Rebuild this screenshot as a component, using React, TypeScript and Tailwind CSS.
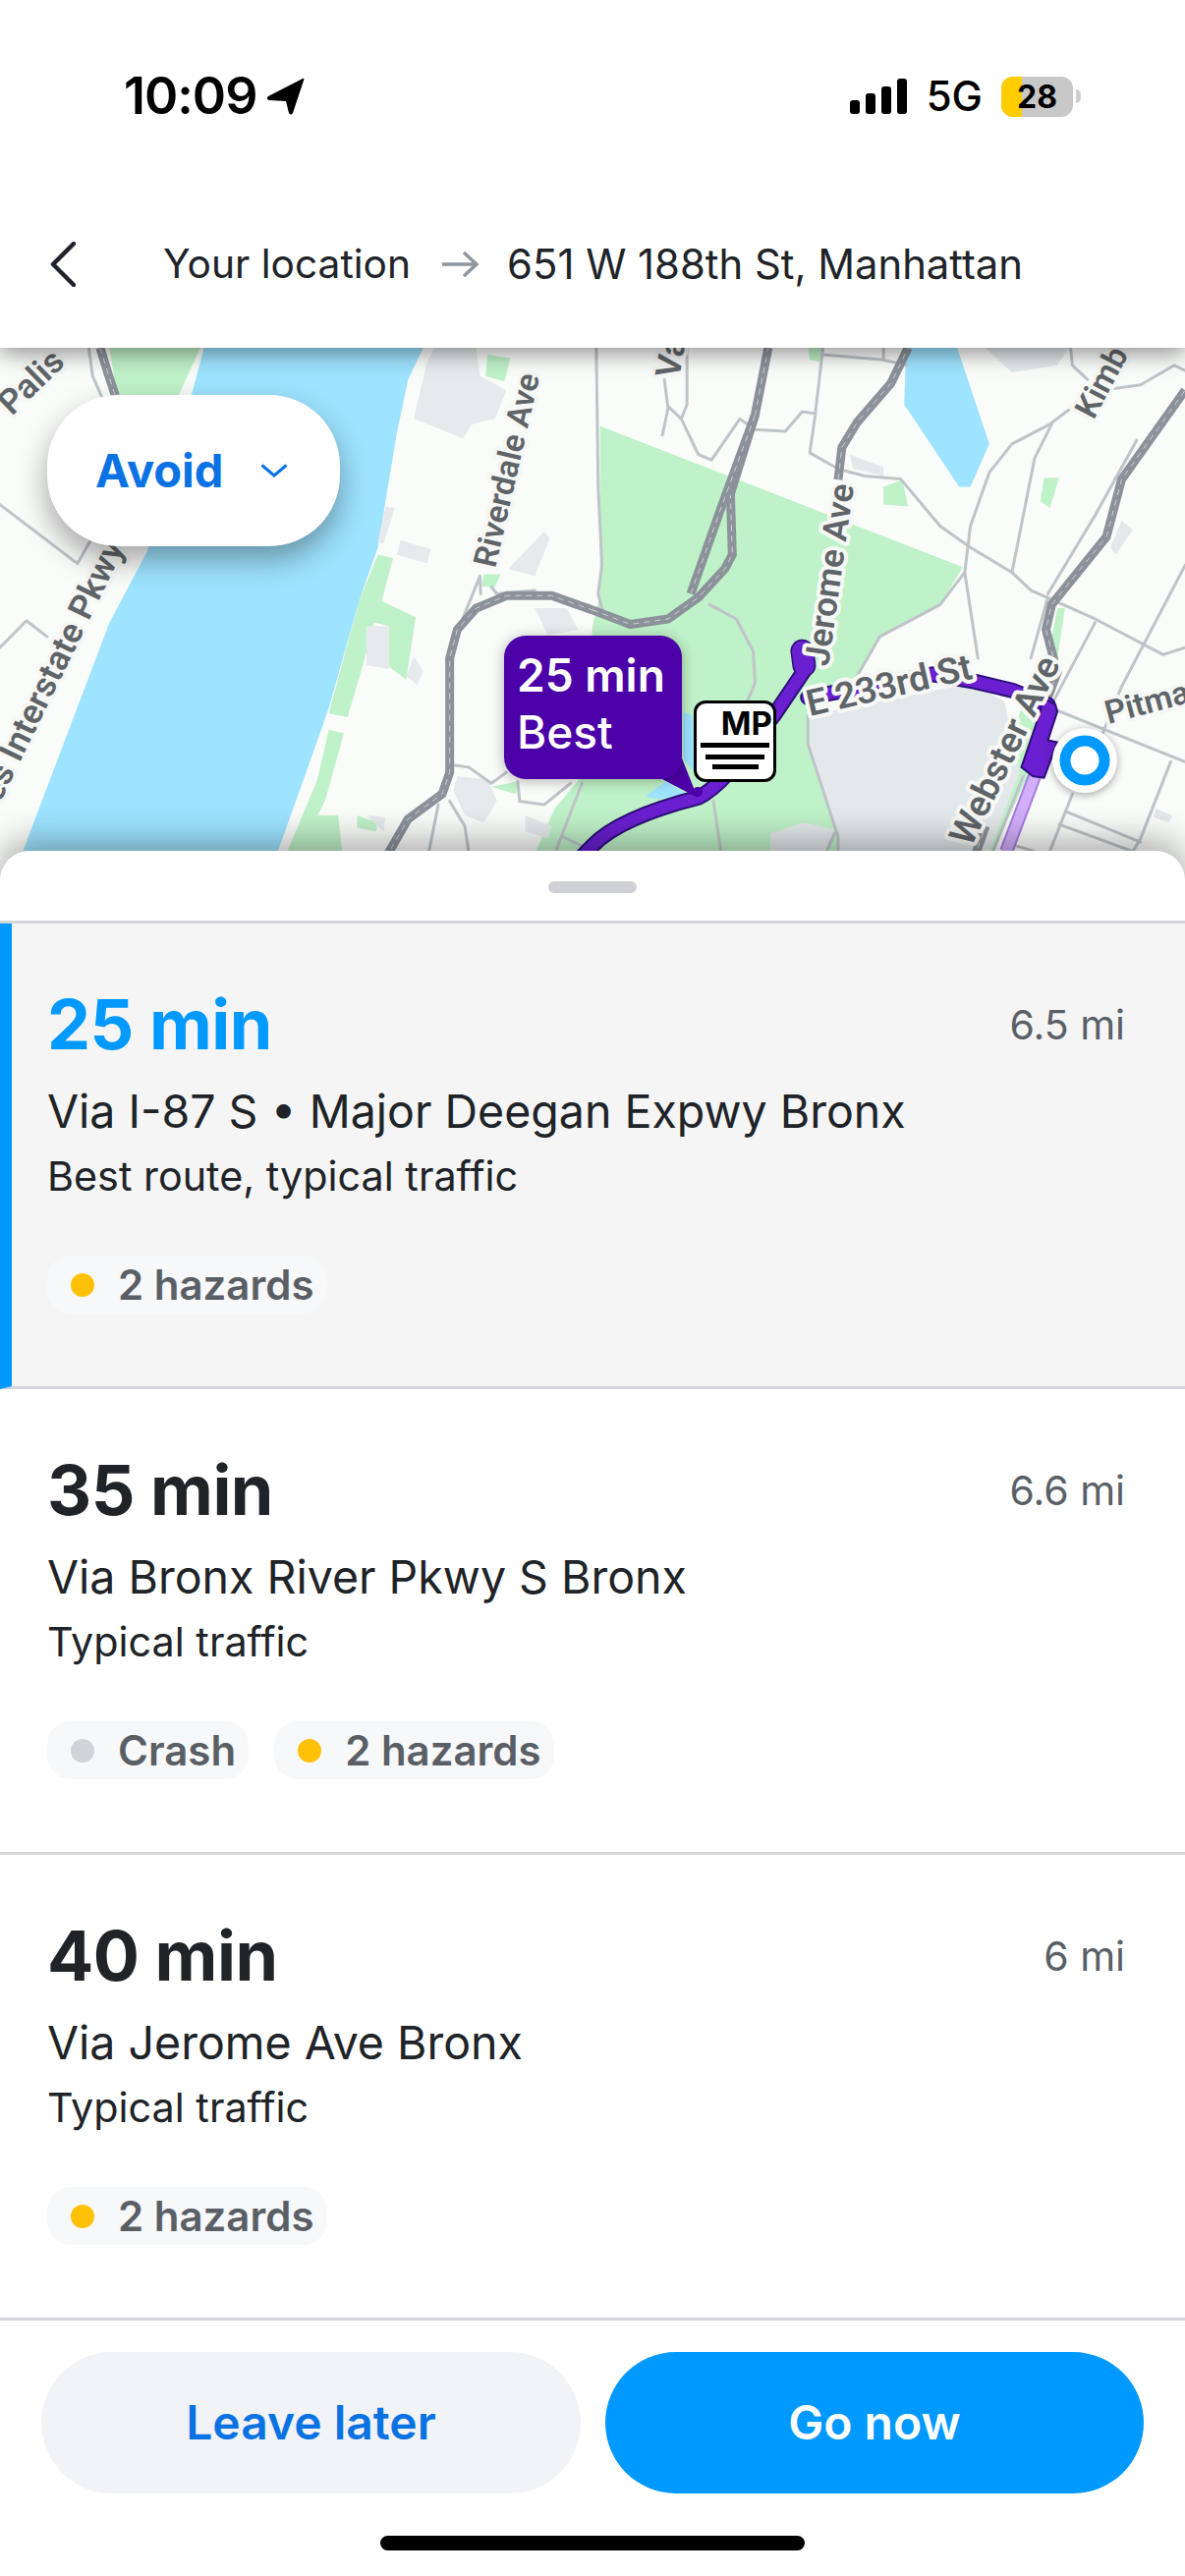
import React from "react";

const Z2 = "translate(0 350) scale(0.3846 0.3636)";
const Z3 = "translate(603 350) scale(0.3846 0.3636)";

const minor2 = [
  "M0,450L205,615L240,550", "M0,850L70,775L125,820", "M235,11L245,90L270,150", "M1205,820L1270,650L1272,700",
  "M1205,1180L1240,1185L1300,1230L1340,1200", "M1370,1225L1375,1280L1440,1290L1510,1230", "M1190,1280L1230,1350L1240,1421",
  "M1160,1290L1135,1421", "M1540,1230L1470,1421", "M1490,1380L1568,1421", "M1300,680L1315,700L1415,690",
];
const minor3 = [
  "M10,11L15,400L25,620L15,700L30,760", "M190,100L200,180L185,255", "M250,11L250,170L235,210L280,310L315,325L390,210L430,240L510,245L555,190L590,195L575,305L650,350L720,370L815,378L920,510L1000,570L1110,640L1160,690L1330,770L1510,870L1568,850",
  "M200,175L235,210", "M610,11L590,190", "M610,30L770,45L830,60", "M770,11L770,45", "M985,640L1000,510L1050,360L1110,280L1210,225L1260,185",
  "M1110,640L1170,320L1215,225", "M1380,125L1450,115L1540,60L1568,75", "M1265,11L1270,60L1310,100", "M985,640L920,730L760,820L700,930",
  "M985,640L1020,880", "M1205,700L1330,480L1440,270", "M1160,880L1205,710", "M1215,1020L1568,1170", "M1568,620L1400,960L1350,1090",
  "M1330,780L1220,1000", "M1530,1170L1450,1385L1430,1421", "M1270,1260L1210,1421", "M1255,1310L1450,1395", "M1235,1345L1430,1421", "M1120,1405L1170,1421",
  "M570,1040L570,1120L650,1380L650,1421", "M320,1280L340,1421", "M310,730L380,770L425,860L430,950L410,1000", "M1140,1210L1060,1421", "M640,1370L620,1421",
];
const high2 = ["M1020,1440L1080,1330L1170,1260L1190,1200L1190,880L1210,800L1260,740L1340,705L1460,705L1568,745", "M265,11L285,80L305,145"];
const high3 = [
  "M0,745L100,785L200,770L280,710L350,630L370,590L365,420L430,200L465,11", "M260,700L340,460L430,200", "M650,380L660,290L700,220L790,110L835,11",
  "M1205,990L1230,920L1200,800L1215,730L1360,540L1400,380L1568,130", "M1010,1440L1040,1350",
];
const routePath = "M-60,1470L0,1405C50,1350 150,1305 280,1270C340,1240 400,1150 480,1040L560,915M570,990L900,925L1010,945L1110,970L1205,1010";

function Roads({ items, transform, width, color }: { items: string[]; transform: string; width: number; color: string }) {
  return (
    <g transform={transform} fill="none" stroke={color} strokeWidth={width} strokeLinejoin="round" strokeLinecap="round">
      {items.map((d) => (
        <path key={d} d={d} vectorEffect="non-scaling-stroke" />
      ))}
    </g>
  );
}

function Highways({ items, transform }: { items: string[]; transform: string }) {
  return (
    <g transform={transform} fill="none" strokeLinejoin="round">
      {items.map((d) => (
        <g key={d}>
          <path d={d} stroke="#8b929a" strokeWidth={9} vectorEffect="non-scaling-stroke" />
          <path d={d} stroke="#ccd1d5" strokeWidth={1} strokeDasharray="6 5" vectorEffect="non-scaling-stroke" />
        </g>
      ))}
    </g>
  );
}

function MapLabel({ x, y, r, size = 37, anchor, children }: { x: number; y: number; r: number; size?: number; anchor?: "end"; children: string }) {
  return (
    <text
      transform={`translate(${x} ${y}) rotate(${r})`}
      textAnchor={anchor}
      fontFamily="Roboto, sans-serif"
      fontSize={size}
      fontWeight={600}
      fill="#5f6468"
      stroke="#f6f8f6"
      strokeWidth={8}
      strokeLinejoin="round"
      paintOrder="stroke"
    >
      {children}
    </text>
  );
}

function MapArt() {
  return (
    <svg className="absolute inset-0 w-full h-full" viewBox="0 354 1206 542">
      <rect x="0" y="354" width="1206" height="542" fill="#fafcfa" />
      <g transform={Z2} fill="#bff2c8">
        <polygon points="290,11 530,11 470,150 310,150" />
        <polygon points="1290,30 1350,40 1335,105 1285,90" />
        <polygon points="1000,590 1040,600 1010,720 1100,765 1075,940 1025,900 1030,790 990,780 960,900 920,1045 870,1035 950,720" />
        <polygon points="870,1080 910,1090 860,1280 840,1320 895,1320 905,1421 760,1421 840,1220" />
        <polygon points="945,1320 1000,1340 995,1365 945,1355" />
        <polygon points="1280,645 1325,645 1310,680 1275,680" />
        <polygon points="1300,1240 1370,1225 1365,1260" />
      </g>
      <g transform={Z3} fill="#bff2c8">
        <polygon points="20,230 980,625 920,730 760,820 700,930 570,1000 570,1120 650,1380 650,1421 -150,1421 -100,1300 -20,1200 0,790 20,700" />
        <polygon points="1195,375 1235,375 1210,460 1185,440" />
        <polygon points="770,400 820,380 835,455 770,450" />
        <polygon points="570,11 610,11 600,50 575,45" />
        <polygon points="1230,740 1250,740 1225,920 1205,880" />
        <polygon points="1140,1000 1200,1100 1060,1421 1020,1421" />
      </g>
      <g transform={Z2} fill="#9ee3ff">
        <polygon points="540,11 1120,11 1080,100 1050,250 1000,570 950,720 870,1020 810,1200 735,1421 60,1421 290,780 390,580 510,130" />
      </g>
      <g transform={Z3} fill="#9ee3ff">
        <polygon points="830,11 965,11 1050,280 1000,400 970,400 825,170" />
        <polygon points="240,1030 265,1040 270,1200 240,1160" />
        <polygon points="140,1265 195,1225 250,1260 170,1275" />
      </g>
      <g transform={Z2} fill="#e6eaed">
        <polygon points="1150,11 1260,11 1270,90 1340,130 1310,210 1250,225 1225,265 1095,210 1130,50" />
        <polygon points="1060,550 1140,575 1130,615 1050,590" />
        <polygon points="1020,455 1045,460 1015,560 1000,555" />
        <polygon points="970,790 1030,790 1030,910 970,900" />
        <polygon points="1095,875 1120,915 1105,955 1075,930" />
        <polygon points="1210,1210 1290,1220 1315,1280 1280,1340 1230,1320 1200,1250" />
        <polygon points="1415,740 1500,740 1530,800 1450,815" />
        <polygon points="1345,630 1440,525 1455,545 1415,650" />
        <polygon points="970,1320 1020,1325 1015,1365 990,1340" />
        <polygon points="1390,1320 1460,1350 1450,1385 1390,1365" />
      </g>
      <g transform={Z3} fill="#e3e8eb">
        <polygon points="570,1040 1000,950 1090,1000 1130,1200 1050,1421 650,1421 650,1380 570,1120" />
        <polygon points="1040,11 1260,11 1230,60 1110,80" />
        <polygon points="680,310 770,345 770,370 690,350" />
        <polygon points="470,1370 560,1340 640,1360 620,1421 470,1421" />
        <polygon points="1370,570 1400,495 1430,520 1385,590" />
        <polygon points="1490,1300 1535,1320 1525,1340 1485,1325" />
      </g>
      <Roads items={minor2} transform={Z2} width={3} color="#bfc4c8" />
      <Roads items={minor3} transform={Z3} width={3} color="#bfc4c8" />
      <Highways items={high2} transform={Z2} />
      <Highways items={high3} transform={Z3} />
      <g transform={Z3} fill="none" strokeLinejoin="round" strokeLinecap="round">
        <path d="M1170,1210L1095,1421" stroke="#a67de0" strokeWidth={14} vectorEffect="non-scaling-stroke" strokeLinecap="butt" />
        <path d="M1170,1210L1095,1421" stroke="#d2aefb" strokeWidth={10} vectorEffect="non-scaling-stroke" strokeLinecap="butt" />
        <path d={routePath} stroke="#2d0f7a" strokeWidth={16} vectorEffect="non-scaling-stroke" />
        <path d="M555,860L560,900" stroke="#2d0f7a" strokeWidth={24} vectorEffect="non-scaling-stroke" />
        <path d={routePath} stroke="#6a1fd0" strokeWidth={12} vectorEffect="non-scaling-stroke" />
        <path d="M555,860L560,900" stroke="#6a1fd0" strokeWidth={21} vectorEffect="non-scaling-stroke" />
        <polygon
          points="1190,990 1225,1010 1230,1030 1205,1110 1230,1115 1195,1215 1165,1210 1135,1185 1185,1030"
          fill="#6a1fd0"
          stroke="#2d0f7a"
          strokeWidth={2}
          vectorEffect="non-scaling-stroke"
        />
      </g>
      <MapLabel x={12} y={424} r={-44} size={35}>Palis</MapLabel>
      <MapLabel x={127} y={557} r={-64} size={35} anchor="end">es Interstate Pkwy</MapLabel>
      <MapLabel x={504} y={579} r={-77} size={33}>Riverdale Ave</MapLabel>
      <MapLabel x={691} y={386} r={-80} size={35}>Va</MapLabel>
      <MapLabel x={843} y={679} r={-82} size={35}>Jerome Ave</MapLabel>
      <MapLabel x={824} y={729} r={-13}>E 233rd St</MapLabel>
      <MapLabel x={988} y={863} r={-64}>Webster Ave</MapLabel>
      <MapLabel x={1128} y={737} r={-15} size={33}>Pitma</MapLabel>
      <MapLabel x={1113} y={428} r={-62} size={33}>Kimb</MapLabel>
      <polygon points="694,772 710,812 672,792" fill="#4b00a8" />
      <circle cx="710" cy="806" r="5" fill="#4b00a8" />
      <circle cx="1104" cy="774" r="33" fill="#ffffff" style={{ filter: "drop-shadow(0 2px 4px rgba(0,0,0,0.35))" }} />
      <circle cx="1104" cy="774" r="20" fill="#ffffff" stroke="#0099ff" strokeWidth={11} />
    </svg>
  );
}

function Chip({ dot, label }: { dot: string; label: string }) {
  return (
    <div className="flex items-center h-[59px] pl-[24px] pr-[13px] gap-[24px] rounded-[24px] bg-[#f7f8f9]">
      <span className={`w-[24px] h-[24px] rounded-full ${dot}`} />
      <span className="text-[42px] leading-[59px] font-semibold text-[#5a5f66]">{label}</span>
    </div>
  );
}

function RouteCard({
  time,
  dist,
  via,
  note,
  selected,
  children,
}: {
  time: string;
  dist: string;
  via: string;
  note: string;
  selected?: boolean;
  children: React.ReactNode;
}) {
  return (
    <div
      className={`h-[474px] border-b-[3px] border-[#d4d6da] pt-[59px] pr-[61px] flex flex-col ${
        selected ? "bg-[#f5f5f5] border-l-[12px] border-l-[#0099ff] pl-[36px]" : "bg-white pl-[48px]"
      }`}
    >
      <div className="flex items-center justify-between h-[88px]">
        <span className={`text-[70px] leading-[88px] font-bold tracking-[-0.5px] ${selected ? "text-[#0099ff]" : "text-[#202327]"}`}>
          {time}
        </span>
        <span className="text-[41px] leading-[48px] text-[#5a5f66]">{dist}</span>
      </div>
      <div className="mt-[16px] text-[46.5px] leading-[56px] text-[#202327]">{via}</div>
      <div className="mt-[14px] text-[41.3px] leading-[48px] text-[#202327]">{note}</div>
      <div className="mt-[57px] flex gap-[26px]">{children}</div>
    </div>
  );
}

export default function App() {
  return (
    <div className="w-[1206px] h-[2622px] bg-white flex flex-col overflow-hidden font-['Inter',sans-serif]">
      <header className="relative z-10 h-[354px] bg-white shadow-[0_5px_22px_rgba(0,0,0,0.45)] flex flex-col">
        <div className="h-[198px] pt-[72px] pl-[126px] pr-[106px] flex items-start justify-between">
          <div className="flex items-center h-[52px] gap-[10px]">
            <span className="text-[52px] leading-[52px] font-semibold text-black tracking-[-1px]">10:09</span>
            <svg width="39" height="38" viewBox="0 0 39 38">
              <path d="M37,1 Q39,0 38,3 L27,36 Q25,39 23,36 L20,24 L3,23 Q-1,22 2,19 Z" fill="#000" />
            </svg>
          </div>
          <div className="flex items-center h-[52px]">
            <svg width="58" height="36" viewBox="0 0 58 36">
              <rect x="0" y="22" width="10" height="14" rx="3" fill="#000" />
              <rect x="16" y="15" width="10" height="21" rx="3" fill="#000" />
              <rect x="32" y="8" width="10" height="28" rx="3" fill="#000" />
              <rect x="48" y="0" width="10" height="36" rx="3" fill="#000" />
            </svg>
            <span className="ml-[20px] text-[42px] leading-[52px] font-medium text-black">5G</span>
            <div className="relative ml-[19px] w-[73px] h-[41px] rounded-[12px] bg-[#c8c8c8] overflow-hidden flex items-center justify-center">
              <div className="absolute left-0 top-0 bottom-0 w-[21px] bg-[#ffcc00]" />
              <span className="relative text-[32px] leading-[41px] font-bold text-black">28</span>
            </div>
            <div className="ml-[3px] w-[5px] h-[14px] rounded-r-full bg-[#cfcfcf]" />
          </div>
        </div>
        <div className="flex items-center h-[76px] mt-[33px] pl-[51px]">
          <svg width="26" height="46" viewBox="0 0 26 46">
            <path d="M24,2 L3,23 L24,44" fill="none" stroke="#202327" strokeWidth="4.5" strokeLinecap="round" strokeLinejoin="round" />
          </svg>
          <span className="ml-[89px] text-[40.7px] leading-[48px] text-[#202327]">Your location</span>
          <svg className="ml-[31px]" width="38" height="28" viewBox="0 0 38 28">
            <path d="M1,14 H36 M23,2 L36,14 L23,26" fill="none" stroke="#8f959c" strokeWidth="3.5" />
          </svg>
          <span className="ml-[29px] text-[41.8px] leading-[48px] text-[#202327]">651 W 188th St, Manhattan</span>
        </div>
      </header>

      <div className="relative h-[542px] shrink-0">
        <MapArt />
        <button className="absolute left-[48px] top-[48px] w-[298px] h-[154px] rounded-[72px] bg-white shadow-[0_14px_30px_rgba(0,0,0,0.35)] flex items-center pl-[49px]">
          <span className="text-[47px] leading-[56px] font-bold text-[#0a72e2]">Avoid</span>
          <svg className="ml-[38px]" width="28" height="14" viewBox="0 0 28 14">
            <path d="M1.5,1.5 L14,12 L26.5,1.5" fill="none" stroke="#0a72e2" strokeWidth="3" />
          </svg>
        </button>
        <div className="absolute left-[513px] top-[293px] w-[181px] h-[146px] rounded-[22px] bg-[#4b00a8] shadow-[0_2px_14px_rgba(0,0,0,0.3)] pl-[13px] pt-[11px] text-white">
          <div className="text-[46px] leading-[58px] font-semibold">25 min</div>
          <div className="text-[46px] leading-[58px] font-medium">Best</div>
        </div>
        <div className="absolute left-[706px] top-[359px] w-[84px] h-[83px] rounded-[12px] bg-white border-[3px] border-black flex flex-col items-center">
          <div className="self-end pr-[1px] mt-[3px] text-[33px] leading-[34px] font-bold text-black">MP</div>
          <div className="mt-[3px] w-[70px] h-[5px] bg-black" />
          <div className="mt-[7px] w-[60px] h-[5px] bg-black" />
          <div className="mt-[5px] w-[47px] h-[5px] bg-black" />
        </div>
      </div>

      <main className="relative z-10 -mt-[30px] flex-1 bg-white rounded-t-[30px] shadow-[0_-10px_34px_rgba(0,0,0,0.32)] flex flex-col">
        <div className="h-[74px] shrink-0 border-b-[3px] border-[#d4d6da] flex justify-center pt-[31px]">
          <div className="w-[90px] h-[12px] rounded-full bg-[#cfd1d6]" />
        </div>
        <RouteCard selected time="25 min" dist="6.5 mi" via="Via I-87 S • Major Deegan Expwy Bronx" note="Best route, typical traffic">
          <Chip dot="bg-[#ffc107]" label="2 hazards" />
        </RouteCard>
        <RouteCard time="35 min" dist="6.6 mi" via="Via Bronx River Pkwy S Bronx" note="Typical traffic">
          <Chip dot="bg-[#d0d3d7]" label="Crash" />
          <Chip dot="bg-[#ffc107]" label="2 hazards" />
        </RouteCard>
        <RouteCard time="40 min" dist="6 mi" via="Via Jerome Ave Bronx" note="Typical traffic">
          <Chip dot="bg-[#ffc107]" label="2 hazards" />
        </RouteCard>
        <footer className="flex-1 flex flex-col items-center">
          <div className="mt-[32px] w-full px-[42px] flex justify-between">
            <button className="w-[549px] h-[144px] rounded-[72px] bg-[#f2f3f7] text-[48px] font-semibold text-[#0a72e2]">Leave later</button>
            <button className="w-[548px] h-[144px] rounded-[72px] bg-[#0099ff] text-[48px] font-semibold text-white">Go now</button>
          </div>
          <div className="mt-[43px] w-[432px] h-[15px] rounded-full bg-black" />
        </footer>
      </main>
    </div>
  );
}
